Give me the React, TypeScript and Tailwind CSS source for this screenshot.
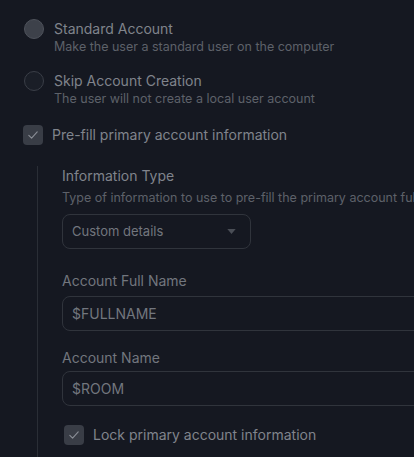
const Check = () => (
  <svg viewBox="0 0 20 20" className="w-[14px] h-[14px]" fill="none">
    <path d="M4 10.5l4 4 8-9" stroke="#8a8e96" strokeWidth="1.6" strokeLinecap="round" strokeLinejoin="round" />
  </svg>
);

const RadioRow = ({ title, desc, checked }: { title: string; desc: string; checked?: boolean }) => (
  <div className="flex gap-[10px]">
    <div
      className={`w-5 h-5 shrink-0 rounded-full border ${
        checked ? "bg-[#3d414a] border-[#4e525b]" : "bg-[#1a1e27] border-[#3a3e47]"
      }`}
    />
    <div className="flex flex-col">
      <span className="text-[14px] leading-5 text-[#80848c]">{title}</span>
      <span className="text-[12.5px] leading-[15px] text-[#5d6169] whitespace-nowrap">{desc}</span>
    </div>
  </div>
);

const CheckRow = ({ label }: { label: string }) => (
  <div className="flex items-center gap-[9px]">
    <div className="w-5 h-5 rounded-[4px] bg-[#393d46] flex items-center justify-center shrink-0">
      <Check />
    </div>
    <span className="text-[14px] text-[#80848c] whitespace-nowrap">{label}</span>
  </div>
);

const App = () => {
  return (
    <div className="w-[414px] h-[457px] overflow-hidden bg-[#151821] font-['Inter',sans-serif] pl-6 pt-[19px]">
      <div className="flex flex-col gap-[17px]">
        <RadioRow title="Standard Account" desc="Make the user a standard user on the computer" checked />
        <RadioRow title="Skip Account Creation" desc="The user will not create a local user account" />
      </div>

      <div className="mt-[18px] -ml-[1px]">
        <CheckRow label="Pre-fill primary account information" />
      </div>

      <div className="mt-[21px] ml-[13px] border-l border-[#2a2e36] pl-6 pb-4">
        <div className="flex flex-col">
          <span className="text-[14px] leading-5 text-[#80848c]">Information Type</span>
          <span className="text-[12.5px] leading-4 mt-[4px] text-[#5d6169] whitespace-nowrap">
            Type of information to use to pre-fill the primary account full name
          </span>
          <div className="mt-[8px] w-[189px] h-[35px] rounded-lg border border-[#30343c] flex items-center justify-between pl-[9px] pr-[14px]">
            <span className="text-[13px] text-[#72767e]">Custom details</span>
            <svg viewBox="0 0 10 6" className="w-[9px] h-[5px]">
              <path d="M0 0h10L5 6z" fill="#4a4e56" />
            </svg>
          </div>
        </div>

        <div className="mt-[22px] flex flex-col">
          <span className="text-[14px] leading-5 text-[#72767e]">Account Full Name</span>
          <div className="mt-[5px] w-[400px] h-[35px] rounded-lg border border-[#30343c] flex items-center pl-[9px]">
            <span className="text-[14px] text-[#72767e]">$FULLNAME</span>
          </div>
        </div>

        <div className="mt-[17px] flex flex-col">
          <span className="text-[14px] leading-5 text-[#72767e]">Account Name</span>
          <div className="mt-[3px] w-[400px] h-[35px] rounded-lg border border-[#30343c] flex items-center pl-[9px]">
            <span className="text-[14px] text-[#72767e]">$ROOM</span>
          </div>
        </div>

        <div className="mt-[18px] ml-[2px]">
          <CheckRow label="Lock primary account information" />
        </div>
      </div>
    </div>
  );
};

export default App;
